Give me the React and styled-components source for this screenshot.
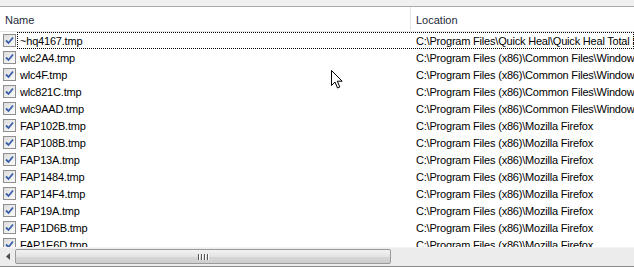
import React from "react";
import styled, { createGlobalStyle } from "styled-components";

const Global = createGlobalStyle`
  html, body { margin: 0; padding: 0; background: #fff; }
  body { width: 634px; height: 267px; overflow: hidden; font-family: "Liberation Sans", Arial, sans-serif; }
`;

const Frame = styled.div`
  position: relative;
  width: 634px;
  height: 267px;
  display: flex;
  flex-direction: column;
  background: #fff;
  overflow: hidden;
`;

const TopStrip = styled.div`
  height: 6px;
  background: #f0f0f0;
  border-bottom: 1px solid #a9a9a9;
  flex: none;
`;

const Header = styled.div`
  height: 24px;
  display: flex;
  flex: none;
  border-bottom: 1px solid #e5e5e5;
  background: #fff;
`;

const HeaderCell = styled.div`
  width: ${(p) => p.w || "auto"};
  flex: ${(p) => (p.w ? "none" : "1")};
  padding-left: ${(p) => p.pl}px;
  display: flex;
  align-items: center;
  font-size: 11px;
  color: #1e2a3a;
  border-right: ${(p) => (p.divider ? "1px solid #e3e3e3" : "none")};
  box-sizing: border-box;
  white-space: nowrap;
  padding-top: 1px;
`;

const Body = styled.div`
  flex: 1;
  overflow: hidden;
  display: flex;
  flex-direction: column;
`;

const Row = styled.div`
  height: 17px;
  flex: none;
  display: flex;
  position: relative;
  align-items: center;
  font-size: 11px;
  letter-spacing: -0.2px;
  color: #000;
  white-space: nowrap;
`;

const Focus = styled.div`
  position: absolute;
  left: 17px;
  right: 0;
  top: 0;
  bottom: 0;
  border: 1px dotted #000;
  pointer-events: none;
`;

const NameCell = styled.div`
  width: 411px;
  flex: none;
  display: flex;
  align-items: center;
  padding-left: 3px;
  box-sizing: border-box;
  gap: 4px;
`;

const LocCell = styled.div`
  flex: 1;
  padding-left: 5px;
  overflow: hidden;
`;

const Check = styled.span`
  width: 11px;
  height: 11px;
  border: 1px solid #8f8f8f;
  background: linear-gradient(135deg, #dcdcdc, #fbfbfb);
  display: inline-flex;
  align-items: center;
  justify-content: center;
  flex: none;
`;

const Scrollbar = styled.div`
  height: 17px;
  flex: none;
  display: flex;
  align-items: stretch;
  background: #ececec;
  border-top: 1px solid #f4f4f4;
  border-bottom: 1px solid #8a8a8a;
  padding-bottom: 1px;
`;

const Arrow = styled.div`
  width: 15px;
  flex: none;
  display: flex;
  align-items: center;
  justify-content: center;
`;

const Thumb = styled.div`
  width: 376px;
  flex: none;
  margin: 1px 0;
  border: 1px solid #9a9a9a;
  border-radius: 2px;
  background: linear-gradient(#f2f2f2, #e4e4e4 50%, #d6d6d6 51%, #cfcfcf);
  display: flex;
  align-items: center;
  justify-content: center;
  box-sizing: border-box;
`;

const Grip = styled.div`
  display: flex;
  gap: 1px;
  span {
    width: 1px;
    height: 6px;
    background: #555;
    box-shadow: 1px 0 0 #fff;
  }
  span + span { margin-left: 1px; }
`;

const Cursor = styled.svg`
  position: absolute;
  left: 331px;
  top: 70px;
`;

const rows = [
  ["~hq4167.tmp", "C:\\Program Files\\Quick Heal\\Quick Heal Total Security"],
  ["wlc2A4.tmp", "C:\\Program Files (x86)\\Common Files\\Windows Live"],
  ["wlc4F.tmp", "C:\\Program Files (x86)\\Common Files\\Windows Live"],
  ["wlc821C.tmp", "C:\\Program Files (x86)\\Common Files\\Windows Live"],
  ["wlc9AAD.tmp", "C:\\Program Files (x86)\\Common Files\\Windows Live"],
  ["FAP102B.tmp", "C:\\Program Files (x86)\\Mozilla Firefox"],
  ["FAP108B.tmp", "C:\\Program Files (x86)\\Mozilla Firefox"],
  ["FAP13A.tmp", "C:\\Program Files (x86)\\Mozilla Firefox"],
  ["FAP1484.tmp", "C:\\Program Files (x86)\\Mozilla Firefox"],
  ["FAP14F4.tmp", "C:\\Program Files (x86)\\Mozilla Firefox"],
  ["FAP19A.tmp", "C:\\Program Files (x86)\\Mozilla Firefox"],
  ["FAP1D6B.tmp", "C:\\Program Files (x86)\\Mozilla Firefox"],
  ["FAP1E6D.tmp", "C:\\Program Files (x86)\\Mozilla Firefox"],
];

const CheckMark = () => (
  <svg width="9" height="9" viewBox="0 0 9 9">
    <path d="M1 4.5 L3.5 7 L8 1.5" fill="none" stroke="#3a5fa8" strokeWidth="1.8" />
  </svg>
);

export default function App() {
  return (
    <>
      <Global />
      <Frame>
        <TopStrip />
        <Header>
          <HeaderCell w="411px" pl={5} divider>Name</HeaderCell>
          <HeaderCell pl={5}>Location</HeaderCell>
        </Header>
        <Body>
          {rows.map(([n, l], i) => (
            <Row key={i}>
              {i === 0 && <Focus />}
              <NameCell>
                <Check><CheckMark /></Check>
                <span>{n}</span>
              </NameCell>
              <LocCell>{l}</LocCell>
            </Row>
          ))}
        </Body>
        <Scrollbar>
          <Arrow>
            <svg width="4" height="7" viewBox="0 0 4 7">
              <path d="M4 0 L0 3.5 L4 7 Z" fill="#4d4d4d" />
            </svg>
          </Arrow>
          <Thumb>
            <Grip><span /><span /><span /><span /></Grip>
          </Thumb>
        </Scrollbar>
        <Cursor width="13" height="20" viewBox="0 0 13 20">
          <path d="M0.5 0.5 L0.5 15.5 L4 12 L6.5 18 L8.8 17 L6.3 11.2 L11.2 11.2 Z" fill="#fff" stroke="#000" strokeWidth="1" />
        </Cursor>
      </Frame>
    </>
  );
}
